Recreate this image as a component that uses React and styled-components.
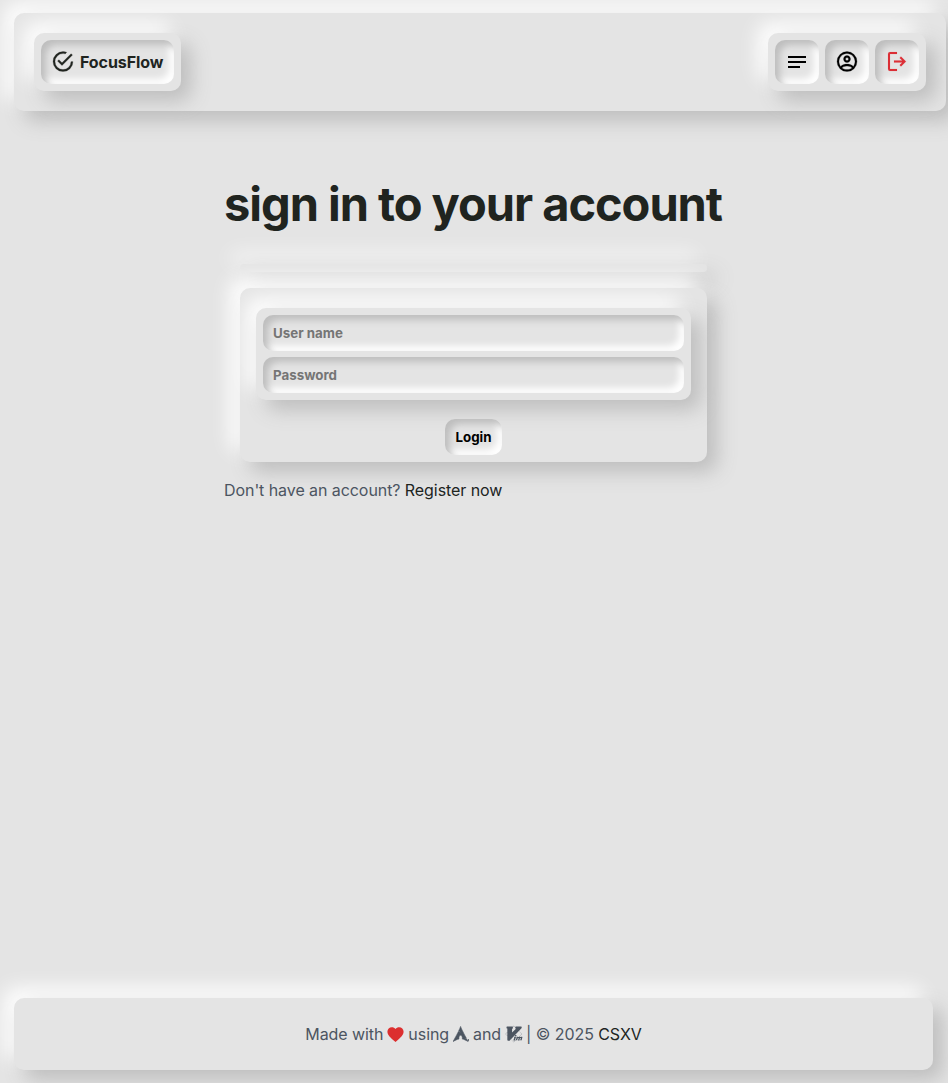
import React from "react";
import styled, { createGlobalStyle, css } from "styled-components";
import { SiArchlinux } from "react-icons/si";
import { DiVim } from "react-icons/di";

const GlobalStyle = createGlobalStyle`
  * { box-sizing: border-box; }
  html, body { margin: 0; padding: 0; }
  body {
    background: #e4e4e4;
    color: #4c5561;
    font-family: Inter, "Liberation Sans", sans-serif;
    font-size: 16px;
    letter-spacing: -0.07px;
    line-height: 24px;
    overflow: hidden;
  }
`;

const raised = css`
  background: #e4e4e4;
  border-radius: 10px;
  box-shadow: 10px 10px 20px #bebebe, -10px -10px 20px #ffffff;
`;

const sunken = css`
  background: #e4e4e4;
  border: 0;
  border-radius: 10px;
  box-shadow: inset 5px 5px 7px #bebebe, inset -5px -5px 7px #ffffff;
`;

const Page = styled.div`
  display: flex;
  flex-direction: column;
  width: 947px;
  height: 1083px;
  padding: 13px 14px;
`;

const Header = styled.header`
  ${raised}
  display: flex;
  justify-content: space-between;
  align-items: center;
  flex: none;
  width: 932px;
  height: 98px;
  padding: 0 20px;
`;

const Group = styled.div`
  ${raised}
  display: flex;
  gap: 6px;
  padding: 7px;
`;

const Brand = styled.a`
  ${sunken}
  display: flex;
  align-items: center;
  gap: 5px;
  width: 133px;
  height: 44px;
  padding-left: 10px;
  color: #20241f;
  font-weight: 700;
`;

const IconButton = styled.button`
  ${sunken}
  display: grid;
  place-items: center;
  width: 44px;
  height: 44px;
  padding: 0;
  color: ${(p) => (p.$danger ? "#dc2f36" : "#000")};
`;

const Icon = styled.svg`
  display: block;
  width: 24px;
  height: 24px;
  fill: currentColor;
  stroke: currentColor;
  stroke-width: ${(p) => p.$stroke ?? 0.25};
`;

const Main = styled.main`
  flex: 1;
  width: 499px;
  margin: 0 auto;
  padding-top: 64px;
`;

const Title = styled.h1`
  margin: 0;
  color: #20241f;
  font-size: 47px;
  font-weight: 700;
  letter-spacing: -1.04px;
  line-height: 58px;
  white-space: nowrap;
`;

const Notice = styled.div`
  ${raised}
  height: 8px;
  margin: 31px 16px 0;
`;

const Form = styled.form`
  ${raised}
  display: flex;
  flex-direction: column;
  align-items: center;
  height: 174px;
  margin: 16px 16px 0;
  padding: 20px 16px 0;
`;

const Fields = styled(Group)`
  flex-direction: column;
  width: 100%;
`;

const Input = styled.input`
  ${sunken}
  width: 100%;
  height: 36px;
  padding: 0 10px;
  font: 700 13.333px Inter, "Liberation Sans", sans-serif;
`;

const Login = styled.button`
  ${sunken}
  width: 57px;
  height: 36px;
  margin-top: 19px;
  padding: 0;
  color: #000;
  font: 700 13.333px Inter, "Liberation Sans", sans-serif;
`;

const Prompt = styled.p`
  margin: 16px 0 0;
`;

const Link = styled.a`
  color: #20241f;
`;

const Footer = styled.footer`
  ${raised}
  display: flex;
  align-items: center;
  justify-content: center;
  gap: 4px;
  flex: none;
  height: 72px;
`;

const Heart = styled.svg`
  width: 17px;
  height: 17px;
  fill: #dc2f2f;
`;

const ArchMark = styled(SiArchlinux)`
  width: 16px;
  height: 16px;
  stroke: currentColor;
  stroke-width: 0.8px;
`;

const VimMark = styled(DiVim)`
  width: 22px;
  height: 22px;
  margin: 0 -2.5px;
`;

export default function App() {
  return (
    <>
      <GlobalStyle />
      <Page>
        <Header>
          <Group>
            <Brand>
              <Icon viewBox="0 0.4 24 24">
                <path d="M20,12A8,8 0 0,1 12,20A8,8 0 0,1 4,12A8,8 0 0,1 12,4C12.76,4 13.5,4.11 14.2,4.31L15.77,2.74C14.61,2.26 13.34,2 12,2A10,10 0 0,0 2,12A10,10 0 0,0 12,22A10,10 0 0,0 22,12M7.91,10.08L6.5,11.5L11,16L21.5,5.5L20.09,4.08L11,13.17L7.91,10.08Z" />
              </Icon>
              FocusFlow
            </Brand>
          </Group>
          <Group>
            <IconButton aria-label="Menu">
              <Icon viewBox="0 0 24 24" $stroke={0}>
                <path d="M3 6h18v2H3zM3 11h18v2H3zM3 16h12v2H3z" />
              </Icon>
            </IconButton>
            <IconButton aria-label="Account">
              <Icon viewBox="0 0.4 24 24">
                <path d="M12,2A10,10 0 0,0 2,12A10,10 0 0,0 12,22A10,10 0 0,0 22,12A10,10 0 0,0 12,2M7.07,18.28C7.5,17.38 10.12,16.5 12,16.5C13.88,16.5 16.5,17.38 16.93,18.28C15.57,19.36 13.86,20 12,20C10.14,20 8.43,19.36 7.07,18.28M18.36,16.83C16.93,15.09 13.46,14.5 12,14.5C10.54,14.5 7.07,15.09 5.64,16.83C4.62,15.5 4,13.82 4,12C4,7.59 7.59,4 12,4C16.41,4 20,7.59 20,12C20,13.82 19.38,15.5 18.36,16.83M12,6C10.06,6 8.5,7.56 8.5,9.5C8.5,11.44 10.06,13 12,13C13.94,13 15.5,11.44 15.5,9.5C15.5,7.56 13.94,6 12,6M12,11A1.5,1.5 0 0,1 10.5,9.5A1.5,1.5 0 0,1 12,8A1.5,1.5 0 0,1 13.5,9.5A1.5,1.5 0 0,1 12,11Z" />
              </Icon>
            </IconButton>
            <IconButton $danger aria-label="Log out">
              <Icon viewBox="0 0.5 24 24" $stroke={0.1}>
                <path d="M5 2.5H12V4.5H5V19.5H12V21.5H5A2 2 0 0 1 3 19.5V4.5A2 2 0 0 1 5 2.5ZM9 11H17.2L14.6 8.4L16 7L21 12L16 17L14.6 15.6L17.2 13H9Z" />
              </Icon>
            </IconButton>
          </Group>
        </Header>
        <Main>
          <Title>sign in to your account</Title>
          <Notice />
          <Form>
            <Fields>
              <Input placeholder="User name" />
              <Input type="password" placeholder="Password" />
            </Fields>
            <Login type="button">Login</Login>
          </Form>
          <Prompt>
            Don't have an account? <Link>Register now</Link>
          </Prompt>
        </Main>
        <Footer>
          <span>Made with</span>
          <Heart viewBox="1.5 2 21 20">
            <path d="M12,21.35L10.55,20.03C5.4,15.36 2,12.27 2,8.5C2,5.41 4.42,3 7.5,3C9.24,3 10.91,3.81 12,5.08C13.09,3.81 14.76,3 16.5,3C19.58,3 22,5.41 22,8.5C22,12.27 18.6,15.36 13.45,20.03L12,21.35Z" />
          </Heart>
          <span>using</span>
          <ArchMark />
          <span>and</span>
          <VimMark />
          <span>| © 2025 <Link>CSXV</Link></span>
        </Footer>
      </Page>
    </>
  );
}
